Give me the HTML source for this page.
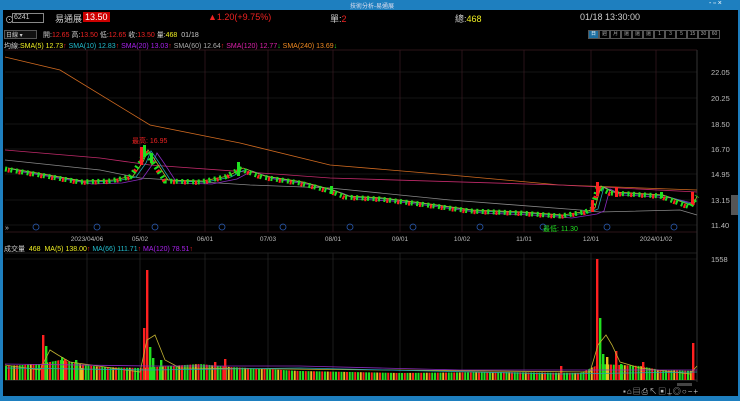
<!DOCTYPE html>
<html><head><meta charset="utf-8"><style>
*{margin:0;padding:0;box-sizing:border-box}
body{width:740px;height:401px;background:#000;overflow:hidden;font-family:"Liberation Sans","Noto Sans CJK TC",sans-serif;position:relative}
.t{position:absolute;white-space:nowrap;font-size:8px;color:#ccc}
.b{display:inline-block;width:11px;height:9px;border:1px solid #555;font-size:5px;color:#aaa;text-align:center;line-height:7px;overflow:hidden}
</style></head><body>
<div style="position:absolute;left:0;top:0;width:740px;height:10px;background:#1e7fbf"></div>
<div style="position:absolute;left:0;top:0;width:3px;height:401px;background:#1e7fbf"></div>
<div style="position:absolute;right:0;top:0;width:2px;height:401px;background:#1e7fbf"></div>
<div style="position:absolute;left:0;top:396px;width:740px;height:5px;background:#1e7fbf"></div>
<div class="t" style="left:350px;top:1px;font-size:6px;color:#dde">技術分析-易通展</div>
<div class="t" style="left:709px;top:0px;font-size:7px;color:#fff">- ▫ ×</div>
<div class="t" style="left:5px;top:13px;font-size:9px">⊙</div>
<div style="position:absolute;left:12px;top:13px;width:32px;height:10px;border:1px solid #888;background:#000"></div>
<div class="t" style="left:14px;top:14px;font-size:7px">6241</div>
<div class="t" style="left:55px;top:12px;font-size:9px">易通展</div>
<div class="t" style="left:83px;top:12px;font-size:9px;background:#c00;color:#fff;padding:0 2px">13.50</div>
<div class="t" style="left:208px;top:12px;font-size:9px;color:#e22">▲1.20(+9.75%)</div>
<div class="t" style="left:330px;top:12px;font-size:9px">單:<span style="color:#e22">2</span></div>
<div class="t" style="left:455px;top:12px;font-size:9px">總:<span style="color:#ee2">468</span></div>
<div class="t" style="left:580px;top:12px;font-size:9px">01/18 13:30:00</div>
<div style="position:absolute;left:4px;top:30px;width:33px;height:9px;border:1px solid #555;background:#111"></div>
<div class="t" style="left:6px;top:30px;font-size:6px">日線 ▾</div>
<div class="t" style="left:43px;top:30px;font-size:7px">開:<span style="color:#e22">12.65</span> 高:<span style="color:#e22">13.50</span> 低:<span style="color:#e22">12.65</span> 收:<span style="color:#e22">13.50</span> 量:<span style="color:#ee2">468</span>&nbsp; 01/18</div>
<div style="position:absolute;left:588px;top:30px;display:flex">
<span class="b" style="background:#1e6fa0;color:#fff">日</span><span class="b">週</span><span class="b">月</span><span class="b">還</span><span class="b">還</span><span class="b">還</span><span class="b">1</span><span class="b">3</span><span class="b">5</span><span class="b">15</span><span class="b">30</span><span class="b">60</span></div>
<div class="t" style="left:4px;top:41px;font-size:7px">均線:<span style="color:#ee2">SMA(5) 12.73</span><span style="color:#e22">↑</span> <span style="color:#2bc">SMA(10) 12.83</span><span style="color:#e22">↑</span> <span style="color:#a2e">SMA(20) 13.03</span><span style="color:#e22">↑</span> <span style="color:#aaa">SMA(60) 12.64</span><span style="color:#e22">↑</span> <span style="color:#d2a">SMA(120) 12.77</span><span style="color:#2d2">↓</span> <span style="color:#e82">SMA(240) 13.69</span><span style="color:#2d2">↓</span></div>
<div class="t" style="left:4px;top:244px;font-size:7px">成交量&nbsp; <span style="color:#ee2">468&nbsp; MA(5) 138.00</span><span style="color:#e22">↑</span> <span style="color:#2bc">MA(66) 111.71</span><span style="color:#e22">↑</span> <span style="color:#a2e">MA(120) 78.51</span><span style="color:#e22">↑</span></div>
<div style="position:absolute;left:731px;top:195px;width:7px;height:20px;background:#555"></div>
<div style="position:absolute;left:677px;top:383px;width:15px;height:3px;background:#444"></div>
<div class="t" style="left:623px;top:386px;font-size:8px;color:#bbb;letter-spacing:1px">▪⌂▤⎙↖▣⍊◎○−+</div>
<svg width="740" height="401" style="position:absolute;left:0;top:0" font-family="Liberation Sans">
<defs>
<pattern id="vp" x="5" y="0" width="16.5" height="401" patternUnits="userSpaceOnUse">
<rect x="0" y="2" width="2" height="401" fill="#20e020"/><rect x="2.75" y="7" width="2" height="401" fill="#ff2020"/><rect x="5.5" y="0" width="2" height="401" fill="#20e020"/><rect x="8.25" y="9" width="2" height="401" fill="#e8c020"/><rect x="11" y="4" width="2" height="401" fill="#ff2020"/><rect x="13.75" y="6" width="2" height="401" fill="#20e020"/>
</pattern>
</defs>
<g stroke="#2a2a2a" stroke-width="0.6">
<line x1="5" x2="697" y1="72" y2="72"/><line x1="5" x2="697" y1="98" y2="98"/><line x1="5" x2="697" y1="124" y2="124"/><line x1="5" x2="697" y1="149" y2="149"/><line x1="5" x2="697" y1="174" y2="174"/><line x1="5" x2="697" y1="200" y2="200"/><line x1="5" x2="697" y1="225" y2="225"/><line x1="5" x2="697" y1="259" y2="259"/>
</g>
<g stroke="#3a1a22" stroke-width="0.7">
<path d="M87 50V232M140 50V232M205 50V232M268 50V232M333 50V232M400 50V232M462 50V232M524 50V232M591 50V232M656 50V232M5 50H697M5 232H697"/>
</g>
<g stroke="#2a2a2a" stroke-width="0.7">
<path d="M87 253V380M140 253V380M205 253V380M268 253V380M333 253V380M400 253V380M462 253V380M524 253V380M591 253V380M656 253V380M5 253H697"/>
</g>
<path d="M697 50V382M5 380H697" stroke="#333"/>
<g fill="#bbb" font-size="7.5">
<text x="711" y="75">22.05</text><text x="711" y="101">20.25</text><text x="711" y="127">18.50</text><text x="711" y="152">16.70</text><text x="711" y="177">14.95</text><text x="711" y="203">13.15</text><text x="711" y="228">11.40</text><text x="711" y="262">1558</text>
</g>
<g fill="#bbb" font-size="6.5" text-anchor="middle">
<text x="87" y="241">2023/04/06</text><text x="140" y="241">05/02</text><text x="205" y="241">06/01</text><text x="268" y="241">07/03</text><text x="333" y="241">08/01</text><text x="400" y="241">09/01</text><text x="462" y="241">10/02</text><text x="524" y="241">11/01</text><text x="591" y="241">12/01</text><text x="656" y="241">2024/01/02</text>
</g>
<g fill="none" stroke="#2a5ab0" stroke-width="0.8">
<circle cx="36" cy="227" r="3"/><circle cx="97" cy="227" r="3"/><circle cx="155" cy="227" r="3"/><circle cx="222" cy="227" r="3"/><circle cx="283" cy="227" r="3"/><circle cx="350" cy="227" r="3"/><circle cx="413" cy="227" r="3"/><circle cx="480" cy="227" r="3"/><circle cx="543" cy="227" r="3"/><circle cx="607" cy="227" r="3"/><circle cx="674" cy="227" r="3"/>
</g>
<text x="5" y="230" fill="#ccc" font-size="7">»</text>
<g fill="none" stroke-width="0.8">
<path d="M5 57L60 70L150 125L240 143L330 165L450 175L560 185L697 190" stroke="#d06a20"/>
<path d="M5 150L100 158L150 165L330 178L560 185L697 192" stroke="#c02a6a"/>
<path d="M5 160L100 170L140 178L250 185L330 188L450 200L580 210L600 212L680 210L697 215" stroke="#888"/>
</g>
<g fill="none" stroke-width="0.8">
<path transform="translate(12,3)" d="M5 168L40 174L80 181L110 180L130 176L140 162L145 150L152 160L165 180L200 181L225 176L240 168L262 176L300 182L330 190L345 196L380 198L420 203L470 210L520 212L560 215L585 211L592 208L598 186L610 192L630 193L660 195L680 200" stroke="#8a2ac0"/>
<path transform="translate(6,1)" d="M5 168L40 174L80 181L110 180L130 176L140 162L145 150L152 160L165 180L200 181L225 176L240 168L262 176L300 182L330 190L345 196L380 198L420 203L470 210L520 212L560 215L585 211L592 208L598 186L610 192L630 193L660 195L688 204" stroke="#20a0b0"/>
<path transform="translate(3,0)" d="M5 168L40 174L80 181L110 180L130 176L140 162L145 150L152 160L165 180L200 181L225 176L240 168L262 176L300 182L330 190L345 196L380 198L420 203L470 210L520 212L560 215L585 211L592 208L598 186L610 192L630 193L660 195L690 206L694 196" stroke="#c0b030"/>
</g>
<g fill="none">
<path d="M5 168L40 174L80 181L110 180L130 176L140 162L145 150L152 160L165 180L200 181L225 176L240 168L262 176L300 182L330 190L345 196L380 198L420 203L470 210L520 212L560 215L585 211L592 208L598 186L610 192L630 193L660 195L690 206L697 195" stroke="#20e020" stroke-width="5" stroke-dasharray="2 3.5" transform="translate(0,1)"/>
<path d="M5 168L40 174L80 181L110 180L130 176L140 162L145 150L152 160L165 180L200 181L225 176L240 168L262 176L300 182L330 190L345 196L380 198L420 203L470 210L520 212L560 215L585 211L592 208L598 186L610 192L630 193L660 195L690 206L697 195" stroke="#ff2020" stroke-width="4" stroke-dasharray="2 9" stroke-dashoffset="-2.75" transform="translate(0,2)"/>
</g>
<rect x="140" y="147" width="3" height="18" fill="#ff2020"/><rect x="143" y="145" width="3" height="12" fill="#20e020"/><rect x="150" y="153" width="3" height="10" fill="#20e020"/><rect x="596" y="182" width="3" height="14" fill="#ff2020"/><rect x="691" y="192" width="3" height="12" fill="#ff2020"/><rect x="237" y="162" width="3" height="14" fill="#20e020"/><rect x="591" y="200" width="3" height="12" fill="#ff2020"/><rect x="615" y="187" width="3" height="10" fill="#ff2020"/><rect x="330" y="186" width="3" height="8" fill="#20e020"/><rect x="660" y="192" width="3" height="6" fill="#20e020"/>
<text x="132" y="143" fill="#e22" font-size="7" font-family="Liberation Sans,Noto Sans CJK TC">最高: 16.95</text>
<text x="543" y="231" fill="#2d2" font-size="7" font-family="Liberation Sans,Noto Sans CJK TC">最低: 11.30</text>
<path fill="url(#vp)" d="M5 380V366L40 364L60 360L80 364L100 367L140 368L200 364L230 367L300 371L400 373L500 372L580 373L600 364L640 366L660 370L695 371V380Z"/>
<g>
<rect x="42" y="335" width="2.4" height="45" fill="#ff2020"/><rect x="45" y="346" width="2.4" height="34" fill="#20e020"/><rect x="61" y="357" width="2.4" height="23" fill="#20e020"/><rect x="64" y="359" width="2.4" height="21" fill="#ff2020"/><rect x="75" y="360" width="2.4" height="20" fill="#20e020"/><rect x="81" y="368" width="2.4" height="12" fill="#e8c020"/><rect x="143" y="328" width="2.4" height="52" fill="#ff2020"/><rect x="146" y="270" width="2.4" height="110" fill="#ff2020"/><rect x="149" y="347" width="2.4" height="33" fill="#20e020"/><rect x="152" y="358" width="2.4" height="22" fill="#20e020"/><rect x="160" y="360" width="2.4" height="20" fill="#20e020"/><rect x="214" y="362" width="2.4" height="18" fill="#ff2020"/><rect x="224" y="359" width="2.4" height="21" fill="#ff2020"/><rect x="560" y="366" width="2.4" height="14" fill="#ff2020"/><rect x="596" y="259" width="2.4" height="121" fill="#ff2020"/><rect x="599" y="318" width="2.4" height="62" fill="#20e020"/><rect x="602" y="354" width="2.4" height="26" fill="#20e020"/><rect x="606" y="357" width="2.4" height="23" fill="#e8c020"/><rect x="615" y="351" width="2.4" height="29" fill="#ff2020"/><rect x="620" y="364" width="2.4" height="16" fill="#20e020"/><rect x="642" y="362" width="2.4" height="18" fill="#ff2020"/><rect x="692" y="343" width="2.4" height="37" fill="#ff2020"/>
</g>
<g fill="none" stroke-width="0.8">
<path d="M5 365L40 370L50 350L58 355L70 362L140 372L147 340L155 335L165 360L180 368L590 372L598 345L606 335L612 345L620 362L640 368L690 374L697 366" stroke="#c0b030"/>
<path d="M5 368L150 370L300 368L560 374L697 372" stroke="#20a0b0"/>
<path d="M5 364L150 366L300 366L460 370L697 370" stroke="#8a2ac0"/>
</g>
</svg>
</body></html>
